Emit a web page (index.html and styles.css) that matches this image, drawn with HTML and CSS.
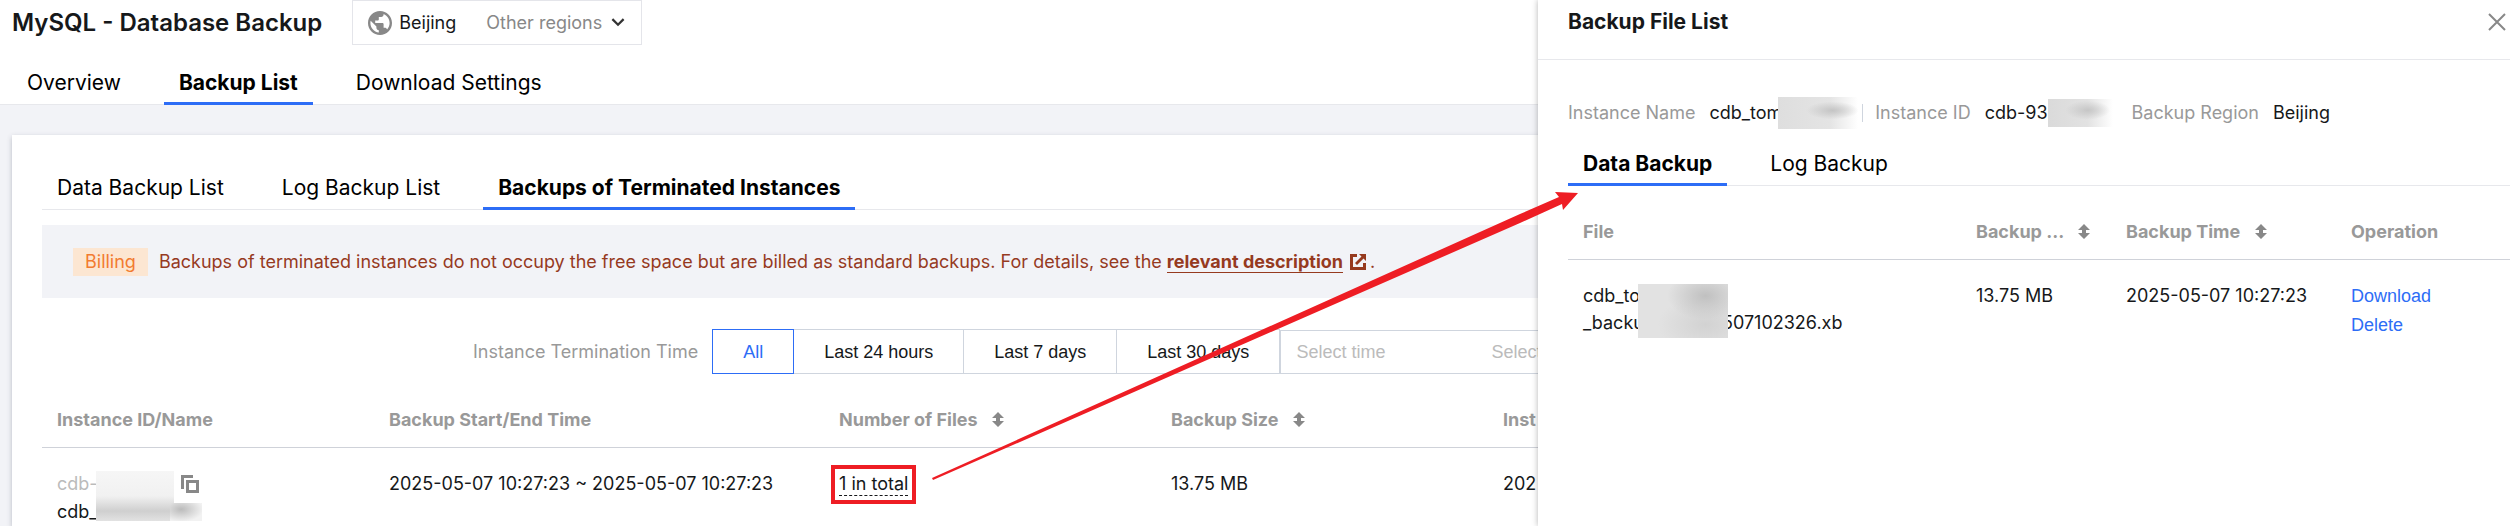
FILE: index.html
```html
<!DOCTYPE html>
<html lang="en">
	<head>
		<meta charset="UTF-8">
		<title>MySQL - Database Backup</title>
		<link rel="stylesheet" href="styles.css">
	</head>
	<body>
		<svg class="defs" width="0" height="0" aria-hidden="true">
			<symbol id="sort" viewBox="0 0 12 16">
				<path d="M6 0l6 6H8v3h4l-6 6-6-6h4V6H0z"/>
			</symbol>
		</svg>
		<div class="wrap">
			<header class="top">
				<div class="top_head">
					<h1>MySQL - Database Backup</h1>
					<div class="region">
						<svg class="globe" viewBox="2 2 20 20" aria-hidden="true"><path d="M12 2C6.480 2 2 6.480 2 12s4.480 10 10 10 10-4.480 10-10S17.520 2 12 2zm-1 17.930c-3.950-.49-7-3.850-7-7.930 0-.62.08-1.210.21-1.790L9 15v1c0 1.100.9 2 2 2v1.930zm6.900-2.540c-.26-.81-1-1.390-1.900-1.390h-1v-3c0-.55-.45-1-1-1H8v-2h2c.55 0 1-.45 1-1V7h2c1.100 0 2-.9 2-2v-.41c2.930 1.190 5 4.060 5 7.410 0 2.080-.8 3.970-2.100 5.390z"/></svg>
						<span>Beijing</span>
						<button type="button" class="other">Other regions
							<svg viewBox="0 0 12 8" aria-hidden="true"><path d="M1 1l5 5 5-5"/></svg>
						</button>
					</div>
				</div>
				<nav class="tabs">
					<a href="#overview">Overview</a>
					<a href="#list" class="active">Backup List</a>
					<a href="#settings">Download Settings</a>
				</nav>
			</header>
			<main class="card">
				<nav class="tabs">
					<a href="#data">Data Backup List</a>
					<a href="#log">Log Backup List</a>
					<a href="#terminated" class="active">Backups of Terminated Instances</a>
				</nav>
				<div class="notice">
					<span class="tag">Billing</span>
					<p>Backups of terminated instances do not occupy the free space but are billed as standard backups. For details, see the <a href="#desc">relevant description</a>
						<svg viewBox="0 0 16 16" aria-hidden="true"><path class="frame" d="M7 1.500H1.500v13h13V9"/><path d="M9 0h7v7l-2.500-2.500L7 11 5 9l6.500-6.500z"/></svg>.</p>
				</div>
				<div class="filter">
					<span class="filter_label" id="term">Instance Termination Time</span>
					<div class="seg" role="group" aria-labelledby="term">
						<button type="button" class="active">All</button>
						<button type="button">Last 24 hours</button>
						<button type="button">Last 7 days</button>
						<button type="button">Last 30 days</button>
					</div>
					<div class="range">
						<input type="text" placeholder="Select time" aria-label="Start time">
						<input type="text" placeholder="Select time" aria-label="End time">
					</div>
				</div>
				<table class="list">
					<colgroup>
						<col class="c_id"><col class="c_time"><col class="c_num"><col class="c_size"><col>
					</colgroup>
					<thead>
						<tr>
							<th>Instance ID/Name</th>
							<th>Backup Start/End Time</th>
							<th>Number of Files <svg class="sort" aria-hidden="true"><use href="#sort"/></svg></th>
							<th>Backup Size <svg class="sort" aria-hidden="true"><use href="#sort"/></svg></th>
							<th>Inst</th>
						</tr>
					</thead>
					<tbody>
						<tr>
							<td class="inst">
								<div class="inst_id">cdb-
									<button type="button" class="copy" aria-label="Copy"><svg viewBox="0 0 18 18" aria-hidden="true"><path d="M12 1.500H1.500V14M6.500 6.500h10v10h-10z"/></svg></button>
								</div>
								<div>cdb_</div>
								<span class="mask mask_id"></span>
								<span class="mask mask_tail"></span>
							</td>
							<td>2025-05-07 10:27:23 ~ 2025-05-07 10:27:23</td>
							<td><a href="#files" class="total">1 in total</a></td>
							<td>13.75 MB</td>
							<td>202</td>
						</tr>
					</tbody>
				</table>
			</main>
		</div>

		<aside class="drawer">
			<div class="drawer_head">
				<h2>Backup File List</h2>
				<button type="button" class="close" aria-label="Close"><svg viewBox="0 0 18 18" aria-hidden="true"><path d="M1 1l16 16M17 1L1 17"/></svg></button>
			</div>
			<div class="drawer_body">
				<dl class="info">
					<div class="name"><dt>Instance Name</dt><dd>cdb_tom<span class="mask mask_name"></span></dd></div>
					<div><dt>Instance ID</dt><dd>cdb-93<span class="mask mask_num"></span></dd></div>
					<div><dt>Backup Region</dt><dd>Beijing</dd></div>
				</dl>
				<nav class="tabs">
					<a href="#d" class="active">Data Backup</a>
					<a href="#l">Log Backup</a>
				</nav>
				<table class="files">
					<colgroup>
						<col><col class="c_fsize"><col class="c_ftime"><col class="c_op">
					</colgroup>
					<thead>
						<tr>
							<th>File</th>
							<th>Backup ... <svg class="sort" aria-hidden="true"><use href="#sort"/></svg></th>
							<th>Backup Time <svg class="sort" aria-hidden="true"><use href="#sort"/></svg></th>
							<th>Operation</th>
						</tr>
					</thead>
					<tbody>
						<tr>
							<td class="file">
								<div>cdb_to</div>
								<div>_backu<span class="gap"></span>507102326.xb</div>
								<span class="mask mask_file"></span>
							</td>
							<td>13.75 MB</td>
							<td>2025-05-07 10:27:23</td>
							<td class="op"><a href="#download">Download</a><a href="#delete">Delete</a></td>
						</tr>
					</tbody>
				</table>
			</div>
		</aside>

		<svg class="arrow" viewBox="0 0 648 290" aria-hidden="true"><path d="M0 286L588 22 627 5 623 0 646 1 631 18 630 12 588 31 1 288z"/></svg>
	</body>
</html>
```
FILE: styles.css
```css
body,
h1,
h2,
p,
dl,
dd {
    margin: 0;
    padding: 0;
}

body {
    position: relative;
    min-height: 100vh;
    overflow: hidden;
    background: #f2f3f7;
    color: #16181a;
    font: 18px/28px Inter, "Liberation Sans", sans-serif;
}

a {
    color: inherit;
    text-decoration: none;
}

button,
input {
    margin: 0;
    padding: 0;
    border: 0;
    background: none;
    color: inherit;
    font: inherit;
}

button {
    cursor: pointer;
}

.defs {
    position: absolute;
}

.wrap {
    display: flex;
    flex-direction: column;
    min-height: 100vh;
}

.top {
    background: #fff;
}

.top_head {
    display: flex;
    align-items: center;
    gap: 30px;
    padding-left: 12px;
}

h1 {
    font-size: 24px;
    font-weight: 600;
}

.region {
    display: flex;
    align-items: center;
    height: 43px;
    padding: 0 16px 0 15px;
    border: 1px solid #e4e5ea;
}

.globe {
    width: 24px;
    height: 24px;
    margin-right: 7px;
    fill: #888;
}

.other {
    display: flex;
    align-items: center;
    gap: 9px;
    margin-left: 30px;
    color: #888;
}

.other svg {
    width: 14px;
    height: 9px;
    fill: none;
    stroke: #333;
    stroke-width: 2;
}

.tabs {
    display: flex;
    gap: 28px;
    color: #000;
    font-size: 21px;
    border-bottom: 1px solid #e7e8ec;
}

.tabs a {
    padding: 0 15px 5px;
    line-height: 28px;
    border-bottom: 3px solid transparent;
    margin-bottom: -1px;
}

.tabs .active {
    font-weight: 700;
    border-color: #2d6df6;
}

.top .tabs {
    padding: 24px 12px 0;
}

.card {
    flex: 1;
    margin: 30px 12px 0;
    padding: 39px 30px 0;
    background: #fff;
    box-shadow: 0 2px 5px rgba(54, 58, 80, .3);
}

.notice {
    display: flex;
    align-items: center;
    gap: 11px;
    height: 73px;
    margin-top: 15px;
    padding: 0 31px;
    background: #f2f3f7;
    color: #963a1f;
}

.tag {
    padding: 0 12px;
    background: #fce6d2;
    color: #f27b30;
}

.notice a {
    font-weight: 700;
    border-bottom: 1px solid #963a1f;
}

.notice svg {
    width: 16px;
    height: 16px;
    margin: 0 4px 0 2px;
    fill: #963a1f;
    vertical-align: -2px;
}

.notice .frame {
    fill: none;
    stroke: #963a1f;
    stroke-width: 3;
}

.filter {
    display: flex;
    align-items: center;
    margin-top: 31px;
    padding-left: 431px;
}

.filter_label {
    margin-right: 14px;
    color: #999;
}

.seg {
    display: flex;
}

.seg button {
    height: 45px;
    padding: 0 30px;
    border: 1px solid #cfd5de;
    margin-left: -1px;
    font-family: "Liberation Sans", Arial, sans-serif;
}

.seg .active {
    position: relative;
    margin-left: 0;
    border-color: #2d6df6;
    color: #2d6df6;
}

.range {
    display: flex;
    height: 42px;
    align-self: flex-end;
    border: 1px solid #cfd5de;
}

.range input {
    width: 180px;
    padding-left: 15px;
    font-family: "Liberation Sans", Arial, sans-serif;
}

.range input::placeholder {
    color: #bbb;
}

table {
    width: 100%;
    table-layout: fixed;
    border-collapse: collapse;
}

th,
td {
    padding: 0 15px;
    text-align: left;
    vertical-align: top;
    white-space: nowrap;
}

th {
    height: 54px;
    border-bottom: 1px solid #cfd2d9;
    color: #999;
    font-weight: 700;
    vertical-align: middle;
}

.sort {
    width: 12px;
    height: 16px;
    margin-left: 10px;
    fill: #888;
    vertical-align: -2px;
}

.list {
    margin-top: 19px;
}

.c_id,
.c_num,
.c_size {
    width: 332px;
}

.c_time {
    width: 450px;
}

.list td {
    padding-top: 22px;
}

.inst {
    position: relative;
}

.inst_id {
    display: flex;
    justify-content: space-between;
    width: 142px;
    color: #bbb;
}

.copy {
    display: flex;
    align-items: center;
}

.copy svg {
    width: 18px;
    height: 18px;
    fill: none;
    stroke: #888;
    stroke-width: 3;
}

.total {
    display: inline-block;
    line-height: 22px;
    border-bottom: 1px dashed #16181a;
    outline: 4px solid #ee1d24;
    outline-offset: 4px;
}

/* drawer */
.drawer {
    position: absolute;
    top: 0;
    right: 0;
    bottom: 0;
    width: 972px;
    background: #fff;
    box-shadow: 0 0 6px rgba(0, 0, 0, .3);
}

.drawer_head {
    display: flex;
    align-items: center;
    justify-content: space-between;
    height: 43px;
    padding: 0 4px 16px 30px;
    border-bottom: 1px solid #e7e8ec;
}

h2 {
    font-size: 21px;
    font-weight: 700;
}

.close svg {
    display: block;
    width: 18px;
    height: 18px;
    fill: none;
    stroke: #888;
    stroke-width: 2;
}

.drawer_body {
    padding: 38px 0 0 30px;
}

.info {
    display: flex;
    margin-bottom: 22px;
}

.info div {
    display: flex;
    align-items: center;
    height: 30px;
    padding-right: 12px;
}

.info .name {
    padding-right: 4px;
}

.name::after {
    content: "";
    height: 18px;
    margin-right: 8px;
    border-left: 1px solid #cfd5de;
}

.info dt {
    margin-right: 14px;
    color: #999;
}

.info dd {
    display: flex;
    align-items: center;
}

.files {
    margin-top: 19px;
}

.files td {
    padding-top: 22px;
    line-height: 27px;
}

.c_fsize {
    width: 150px;
}

.c_ftime {
    width: 225px;
}

.c_op {
    width: 174px;
}

.file {
    position: relative;
}

.gap {
    display: inline-block;
    width: 78px;
}

.op a {
    display: block;
    color: #2d6df6;
    font-family: "Liberation Sans", Arial, sans-serif;
    line-height: 29px;
}

/* blurred patches over private values */
.mask_name {
    width: 80px;
    height: 32px;
    margin: 0 4px 0 -4px;
    background: radial-gradient(ellipse at 68% 42%, #c4c4c4, rgba(196, 196, 196, 0) 34%), linear-gradient(90deg, #dedede, #e4e4e4 65%, #fff);
}

.mask_num {
    width: 72px;
    height: 28px;
    background: radial-gradient(ellipse at 55% 40%, #c6c6c6, rgba(198, 198, 198, 0) 40%), linear-gradient(90deg, #dadada, #e2e2e2 55%, #fff 90%);
}

.mask_id {
    position: absolute;
    top: 23px;
    left: 54px;
    width: 78px;
    height: 50px;
    background: linear-gradient(#f6f6f6, #f1f1f1 50%, #cfcfcf 80%, #e2e2e2);
}

.mask_tail {
    position: absolute;
    top: 55px;
    left: 128px;
    width: 32px;
    height: 18px;
    background: radial-gradient(ellipse at 35% 35%, #bbb, #f2f2f2 75%);
}

.mask_file {
    position: absolute;
    top: 24px;
    left: 70px;
    width: 90px;
    height: 54px;
    background: radial-gradient(ellipse at 75% 22%, #c0c0c0, rgba(192, 192, 192, 0) 40%), radial-gradient(ellipse at 75% 75%, #d2d2d2, rgba(210, 210, 210, 0) 50%), #e2e2e2;
}

/* pointer from the file count to the drawer */
.arrow {
    position: absolute;
    top: 192px;
    left: 932px;
    width: 648px;
    height: 290px;
    fill: #ee1d24;
}
```
